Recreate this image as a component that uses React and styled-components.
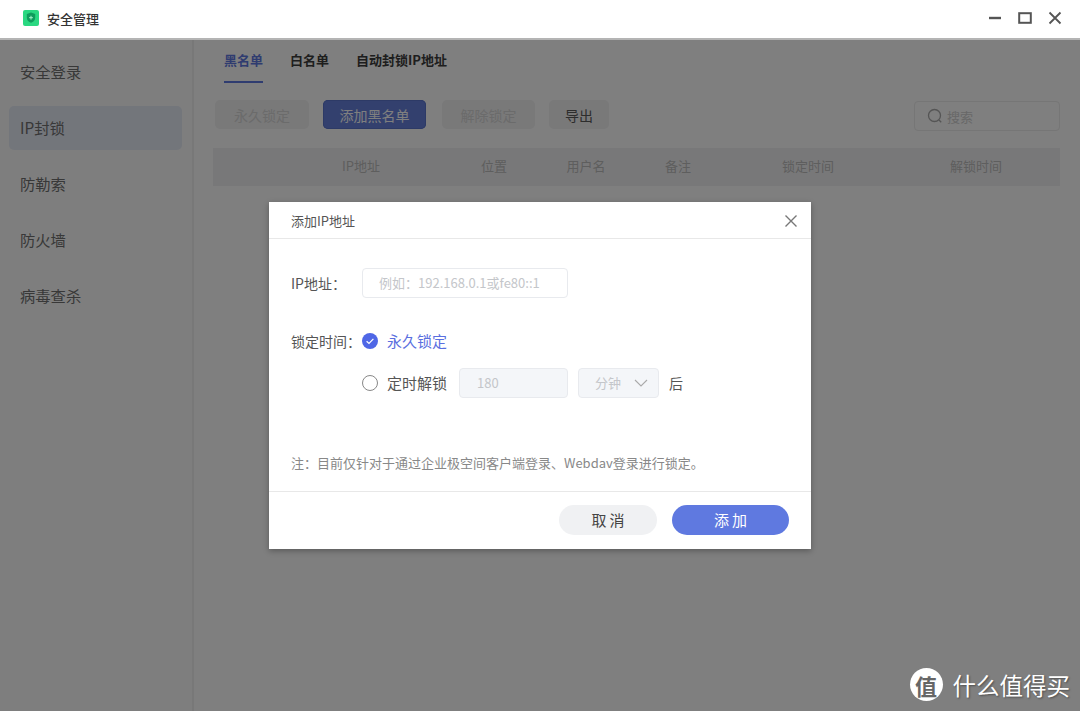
import React from "react";
import styled, { createGlobalStyle } from "styled-components";

const Global = createGlobalStyle`
  html, body { margin: 0; padding: 0; background: #fff; }
  body { font-family: "Noto Sans CJK SC", "Noto Sans", sans-serif; }
  * { box-sizing: border-box; }
`;
const Page = styled.div`
  position: relative; width: 1080px; height: 711px; overflow: hidden;
  display: flex; flex-direction: column; background: #fff;
`;
const TitleBar = styled.header`
  height: 40px; flex: none; display: flex; align-items: center; padding: 0 18px 2px 23px;
  background: #fff; border-bottom: 2px solid #b4b4b4; position: relative; z-index: 3;
`;
const AppName = styled.span`
  margin-left: 8px; font-size: 13px; font-weight: 500; color: #333; flex: 1;
`;
const WinBtns = styled.div`display: flex; gap: 16px; align-items: center; color: #555;`;
const Body = styled.div`flex: 1; display: flex; min-height: 0;`;
const Side = styled.nav`
  width: 194px; flex: none; padding: 10px 10px 0 9px; border-right: 2px solid #f0f0f0;
  display: flex; flex-direction: column; gap: 12px; background: #fdfdfd;
`;
const SideItem = styled.div`
  height: 44px; display: flex; align-items: center; padding: 0 0 2px 11px; border-radius: 5px;
  font-size: 15.3px; color: #707070; background: ${p => (p.$on ? "#e7ecf7" : "transparent")};
`;
const Main = styled.main`flex: 1; padding: 0 20px 0 19px; min-width: 0; background: #fff;`;
const Tabs = styled.div`display: flex; gap: 27px; padding-left: 11px; height: 43px;`;
const Tab = styled.div`
  font-size: 13px; font-weight: 700; padding-top: 10px; height: 43px; line-height: 20px;
  color: ${p => (p.$on ? "#5f78e0" : "#3c3c3c")};
  border-bottom: 2px solid ${p => (p.$on ? "#5f78e0" : "transparent")};
`;
const Toolbar = styled.div`
  display: flex; align-items: flex-start; gap: 14px; margin-top: 17px; padding-left: 2px; height: 32px;
`;
const ToolBtn = styled.button`
  height: 29px; border: none; border-radius: 5px; font: inherit; font-size: 14px; padding: 0;
  width: ${p => p.$w}px; margin-right: ${p => (p.$primary ? 2 : 0)}px;
  background: ${p => (p.$primary ? "#6681dc" : "#f2f2f3")};
  color: ${p => (p.$primary ? "#fff" : p.$muted ? "#d6d6d6" : "#5a5a5a")};
  ${p => p.$primary && "box-shadow: inset 0 0 0 1px #5a74cc;"}
`;
const Search = styled.div`
  margin: 1px 0 0 auto; width: 146px; height: 30px; border: 1px solid #ececec; border-radius: 4px;
  display: flex; align-items: center; gap: 4px; padding-left: 12px; font-size: 13px; color: #d0d0d0; background: #fefefe;
`;
const THead = styled.div`
  position: relative; height: 38px; margin-top: 16px; background: #f1f1f2; font-size: 13px; color: #bcbcbc;
`;
const Th = styled.span`
  position: absolute; top: 0; line-height: 36px; transform: translateX(-50%); white-space: nowrap;
  left: ${p => p.$x}px;
`;
const Overlay = styled.div`
  position: absolute; left: 0; right: 0; top: 40px; bottom: 0; z-index: 2;
  background: rgba(0, 0, 0, 0.5); display: flex; align-items: center; justify-content: center;
`;
const Modal = styled.div`
  width: 542px; height: 347px; margin-top: -1px; background: #fff; display: flex; flex-direction: column;
  box-shadow: 0 2px 6px rgba(0,0,0,.3);
`;
const ModalHead = styled.div`
  height: 37px; flex: none; display: flex; align-items: center; justify-content: space-between;
  padding: 2px 13px 0 22px; border-bottom: 1px solid #e8e8e8; font-size: 13px; color: #555;
`;
const ModalBody = styled.div`flex: 1; padding: 29px 22px 0; display: flex; flex-direction: column;`;
const Row = styled.div`display: flex; align-items: center; height: 30px; margin-bottom: ${p => p.$mb || 0}px;`;
const Label = styled.div`width: 71px; flex: none; font-size: 14px; color: #555;`;
const Field = styled.div`
  height: 30px; border: 1px solid #e8eaee; border-radius: 4px; display: flex; align-items: center; font-size: 13px;
  width: ${p => p.$w}px; padding-left: ${p => p.$pl || 16}px; color: #c4c6ca;
  background: ${p => (p.$off ? "#f4f6f9" : "#fff")};
`;
const Select = styled(Field)`margin-left: 10px; gap: 13px;`;
const RadioLabel = styled.span`
  margin-left: 9px; font-size: 15px; width: 72px; color: ${p => (p.$on ? "#5a6fe0" : "#555")};
`;
const EmptyRadio = styled.span`
  width: 16px; height: 16px; border-radius: 50%; border: 1.5px solid #888; flex: none; background: #fff;
`;
const After = styled.span`margin-left: 10px; font-size: 14px; color: #555;`;
const Note = styled.div`margin-top: 56px; font-size: 13px; line-height: 18px; color: #888;`;
const ModalFoot = styled.div`
  height: 58px; flex: none; border-top: 1px solid #e8e8e8; display: flex; justify-content: flex-end;
  gap: 15px; padding: 13px 22px 0 0;
`;
const FootBtn = styled.button`
  height: 30px; border: none; border-radius: 15px; font: inherit; font-size: 15px; letter-spacing: 3px; padding: 0 0 0 3px;
  width: ${p => p.$w}px; color: ${p => (p.$primary ? "#fff" : "#444")};
  background: ${p => (p.$primary ? "#5f79e0" : "#f0f1f3")};
`;
const Watermark = styled.div`
  position: absolute; right: 10px; bottom: 10px; z-index: 4; display: flex; align-items: center; gap: 10px;
  color: #fff; font-size: 23.5px; line-height: 32px; text-shadow: 1px 1px 2px rgba(0,0,0,.4);
`;
const WmLogo = styled.span`
  width: 33px; height: 33px; border-radius: 50%; background: #fff; color: #666; font-size: 22px; font-weight: 700;
  display: flex; align-items: center; justify-content: center; text-shadow: none;
`;

const Th_ = [["IP地址", 148], ["位置", 281], ["用户名", 373], ["备注", 465], ["锁定时间", 595], ["解锁时间", 763]];

export default function App() {
  return (
    <Page>
      <Global />
      <TitleBar>
        <svg width="16" height="16" viewBox="0 0 16 16">
          <rect width="16" height="16" rx="2" fill="#2ad881" />
          <path d="M8 2.6l4.2 1.3v3.8c0 2.6-1.9 4.1-4.2 5-2.3-.9-4.2-2.4-4.2-5V3.9z" fill="#0f9c5c" />
          <path d="M8 5.8v3.8M6.1 7.7h3.8" stroke="#a5f2ca" strokeWidth="1" />
        </svg>
        <AppName>安全管理</AppName>
        <WinBtns>
          <svg width="14" height="14" viewBox="0 0 14 14"><path d="M1 7h12" stroke="#555" strokeWidth="2.4" /></svg>
          <svg width="14" height="14" viewBox="0 0 14 14"><rect x="1.2" y="2.2" width="11.6" height="9.6" fill="none" stroke="#555" strokeWidth="2" /></svg>
          <svg width="14" height="14" viewBox="0 0 14 14"><path d="M1.5 1.5l11 11M12.5 1.5l-11 11" stroke="#555" strokeWidth="1.8" /></svg>
        </WinBtns>
      </TitleBar>
      <Body>
        <Side>
          <SideItem>安全登录</SideItem>
          <SideItem $on>IP封锁</SideItem>
          <SideItem>防勒索</SideItem>
          <SideItem>防火墙</SideItem>
          <SideItem>病毒查杀</SideItem>
        </Side>
        <Main>
          <Tabs>
            <Tab $on>黑名单</Tab>
            <Tab>白名单</Tab>
            <Tab>自动封锁IP地址</Tab>
          </Tabs>
          <Toolbar>
            <ToolBtn $w={94} $muted>永久锁定</ToolBtn>
            <ToolBtn $w={103} $primary>添加黑名单</ToolBtn>
            <ToolBtn $w={93} $muted>解除锁定</ToolBtn>
            <ToolBtn $w={60}>导出</ToolBtn>
            <Search>
              <svg width="16" height="16" viewBox="0 0 16 16" fill="none" stroke="#aaa" strokeWidth="1.3">
                <circle cx="7.5" cy="7.5" r="6" /><path d="M12 12l2.2 2.2" />
              </svg>
              搜索
            </Search>
          </Toolbar>
          <THead>
            {Th_.map(([t, x]) => <Th key={t} $x={x}>{t}</Th>)}
          </THead>
        </Main>
      </Body>
      <Overlay>
        <Modal>
          <ModalHead>
            添加IP地址
            <svg width="14" height="14" viewBox="0 0 14 14"><path d="M1.5 1.5l11 11M12.5 1.5l-11 11" stroke="#777" strokeWidth="1.4" /></svg>
          </ModalHead>
          <ModalBody>
            <Row $mb={28}>
              <Label>IP地址：</Label>
              <Field $w={206}>例如：192.168.0.1或fe80::1</Field>
            </Row>
            <Row $mb={12}>
              <Label>锁定时间：</Label>
              <svg width="16" height="16" viewBox="0 0 16 16">
                <circle cx="8" cy="8" r="8" fill="#4f67e6" />
                <path d="M4.6 8.2l2.4 2.3 4.4-4.7" fill="none" stroke="#fff" strokeWidth="1.2" />
              </svg>
              <RadioLabel $on>永久锁定</RadioLabel>
            </Row>
            <Row>
              <Label />
              <EmptyRadio />
              <RadioLabel>定时解锁</RadioLabel>
              <Field $w={109} $off $pl={17}>180</Field>
              <Select $w={81} $off $pl={16}>
                分钟
                <svg width="14" height="8" viewBox="0 0 14 8"><path d="M1 1l6 6 6-6" fill="none" stroke="#aaa" strokeWidth="1.1" /></svg>
              </Select>
              <After>后</After>
            </Row>
            <Note>注：目前仅针对于通过企业极空间客户端登录、Webdav登录进行锁定。</Note>
          </ModalBody>
          <ModalFoot>
            <FootBtn $w={98}>取消</FootBtn>
            <FootBtn $w={117} $primary>添加</FootBtn>
          </ModalFoot>
        </Modal>
      </Overlay>
      <Watermark>
        <WmLogo>值</WmLogo>
        什么值得买
      </Watermark>
    </Page>
  );
}
